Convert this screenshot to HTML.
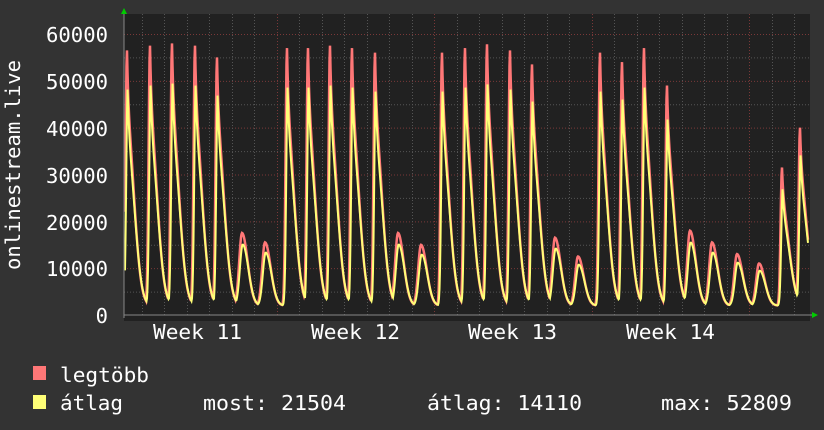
<!DOCTYPE html>
<html><head><meta charset="utf-8"><style>
html,body{margin:0;padding:0;background:#333;}
body{width:824px;height:430px;overflow:hidden;position:relative;font-family:"DejaVu Sans Mono","Liberation Mono",monospace;color:#fff;}
svg{position:absolute;left:0;top:0;}
text{font-family:"DejaVu Sans Mono","Liberation Mono",monospace;fill:#fff;}
</style></head><body>
<svg id="s" width="824" height="430" xmlns="http://www.w3.org/2000/svg">
<rect x="0" y="0" width="824" height="430" fill="#333"/>
<rect x="124" y="14" width="686" height="307" fill="#212121"/>
<g id="grid"></g>
<g id="data"></g>
<line x1="124" y1="315" x2="812" y2="315" stroke="#888" stroke-width="1"/>
<line x1="124" y1="12" x2="124" y2="318" stroke="#888" stroke-width="1"/>
<polygon points="121,14 127,14 124,8" fill="#0c0"/>
<polygon points="812,312 812,318 818,315" fill="#0c0"/>
<g font-size="20.5" text-anchor="end">
<text x="108" y="42" textLength="62" lengthAdjust="spacingAndGlyphs">60000</text>
<text x="108" y="89" textLength="62" lengthAdjust="spacingAndGlyphs">50000</text>
<text x="108" y="136" textLength="62" lengthAdjust="spacingAndGlyphs">40000</text>
<text x="108" y="183" textLength="62" lengthAdjust="spacingAndGlyphs">30000</text>
<text x="108" y="230" textLength="62" lengthAdjust="spacingAndGlyphs">20000</text>
<text x="108" y="276" textLength="62" lengthAdjust="spacingAndGlyphs">10000</text>
<text x="108" y="323">0</text>
</g>
<g font-size="20.5">
<text x="153" y="339" textLength="89" lengthAdjust="spacingAndGlyphs">Week 11</text>
<text x="311" y="339" textLength="89" lengthAdjust="spacingAndGlyphs">Week 12</text>
<text x="468" y="339" textLength="89" lengthAdjust="spacingAndGlyphs">Week 13</text>
<text x="626" y="339" textLength="89" lengthAdjust="spacingAndGlyphs">Week 14</text>
</g>
<text font-size="20.5" text-anchor="middle" textLength="210" lengthAdjust="spacingAndGlyphs" transform="translate(20,165) rotate(-90)">onlinestream.live</text>
<rect x="33" y="366" width="13" height="14" fill="#f77"/>
<rect x="33" y="395" width="13" height="14" fill="#ff7"/>
<g font-size="20.5">
<text x="60" y="382" textLength="89" lengthAdjust="spacingAndGlyphs">legtöbb</text>
<text x="60" y="410" textLength="63" lengthAdjust="spacingAndGlyphs">átlag</text>
<text x="203" y="410" textLength="143" lengthAdjust="spacingAndGlyphs">most: 21504</text>
<text x="427" y="410" textLength="155" lengthAdjust="spacingAndGlyphs">átlag: 14110</text>
<text x="661" y="410" textLength="131" lengthAdjust="spacingAndGlyphs">max: 52809</text>
</g>
</svg>
<script>
var NS="http://www.w3.org/2000/svg";
var g=document.getElementById('grid'),d=document.getElementById('data');
function ln(p,x1,y1,x2,y2,c){var l=document.createElementNS(NS,'line');l.setAttribute('x1',x1);l.setAttribute('y1',y1);l.setAttribute('x2',x2);l.setAttribute('y2',y2);l.setAttribute('stroke',c);l.setAttribute('stroke-dasharray','1,2');p.appendChild(l);}
function Y(v){return 315-v*281/60000;}
for(var v=5000;v<=62500;v+=5000){ln(g,124,Y(v)+.5,810,Y(v)+.5,v%10000==0?'#7a3838':'#555');}
for(var x=141.5;x<810;x+=22.5){var maj=Math.abs(((x-276)/157.5)-Math.round((x-276)/157.5))<0.01;ln(g,Math.round(x)+.5,14,Math.round(x)+.5,315,maj?'#7a3838':'#555');}
var peaks=[[127,56500],[150,57500],[172,58000],[195,57500],[217,55000],[242,17500],[265,15500],[287,57000],[308,57000],[330,57500],[352,57000],[375,56000],[398,17500],[421,15000],[442,56000],[465,57000],[487,57800],[510,56500],[532,53500],[555,16500],[578,12500],[600,56000],[622,54000],[644,57000],[667,49000],[690,18000],[712,15500],[737,13000],[759,11000],[782,31500],[800,40000]];
function val(x,ratio){var best=2000;for(var i=0;i<peaks.length;i++){var p=peaks[i],dx=x-p[0];var f;if(dx<0){f=Math.exp(-Math.pow(dx/2,2));}else{f=0.3*Math.exp(-dx/1.5)+0.7*Math.exp(-Math.pow(dx/10,2));}var pk=p[1]*ratio;if(p[1]<20000)f=Math.exp(-Math.pow(dx/(dx<0?4:8),2));var v=2000+(pk-2000)*f;if(v>best)best=v;}return best;}
function path(ratio,off){var s='';for(var x=125;x<=808;x+=0.5){s+=(x==125?'M':'L')+x+','+Y(val(x-off,ratio)).toFixed(1);}return s;}
function pth(s,c,w){var p=document.createElementNS(NS,'path');p.setAttribute('d',s);p.setAttribute('stroke',c);p.setAttribute('stroke-width',w);p.setAttribute('fill','none');d.appendChild(p);}
pth(path(1,0),'#f77',2.5);
pth(path(0.86,0.7),'#ff7',2);
</script>
</body></html>
